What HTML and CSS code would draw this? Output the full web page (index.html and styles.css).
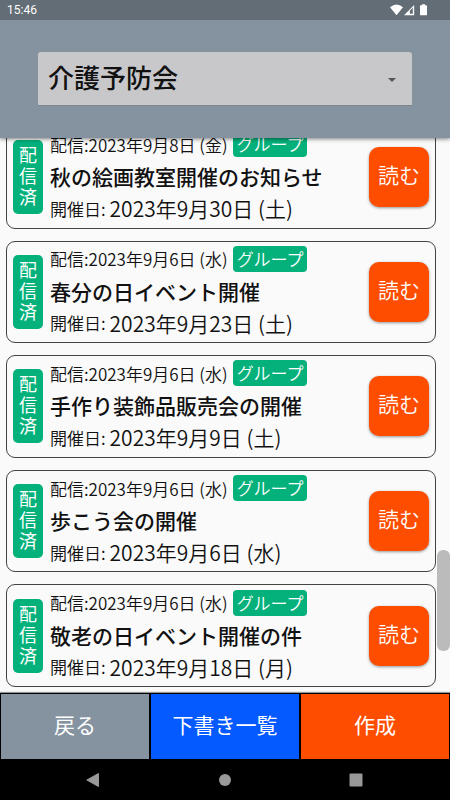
FILE: index.html
```html
<!DOCTYPE html>
<html lang="ja">
<head>
<meta charset="utf-8">
<meta name="viewport" content="width=device-width, initial-scale=1">
<title>介護予防会</title>
<link rel="stylesheet" href="styles.css">
</head>
<body>
<div class="screen">
  <div class="status">
    <span class="clock">15:46</span>
    <svg class="status-icons" width="40" height="12" viewBox="0 0 40 12" aria-hidden="true">
      <path d="M0 3.200Q6.500-2 13 3.200L6.500 11.200Z" fill="#fff"/>
      <path d="M14 11.200L24.200 1V11.200Z" fill="#fff"/>
      <path d="M19.800 9.800V6.700L22.800 3.700V9.800Z" fill="#636d76"/>
      <path d="M32 .3h3v1h1.200q.8 0 .8.8v8.300q0 .9-.8.9h-5.400q-.8 0-.8-.9V2.100q0-.8.8-.8H32Z" fill="#fff"/>
    </svg>
  </div>
  <header class="header">
    <div class="picker">
      <select class="picker-select" aria-label="グループ選択"><option>介護予防会</option></select>
      <svg class="picker-arrow" width="8" height="4" viewBox="0 0 8 4" aria-hidden="true"><path d="M0 0h8L4 4Z" fill="#555558"/></svg>
    </div>
  </header>
  <main class="content">
    <div class="list">
      <article class="card">
        <div class="sent">配信済</div>
        <div class="info">
          <div class="row">配信:2023年9月8日 (金)<span class="tag">グループ</span></div>
          <h2 class="title">秋の絵画教室開催のお知らせ</h2>
          <div class="row">開催日:<span class="date">2023年9月30日 (土)</span></div>
        </div>
        <button class="read" type="button">読む</button>
      </article>
      <article class="card">
        <div class="sent">配信済</div>
        <div class="info">
          <div class="row">配信:2023年9月6日 (水)<span class="tag">グループ</span></div>
          <h2 class="title">春分の日イベント開催</h2>
          <div class="row">開催日:<span class="date">2023年9月23日 (土)</span></div>
        </div>
        <button class="read" type="button">読む</button>
      </article>
      <article class="card">
        <div class="sent">配信済</div>
        <div class="info">
          <div class="row">配信:2023年9月6日 (水)<span class="tag">グループ</span></div>
          <h2 class="title">手作り装飾品販売会の開催</h2>
          <div class="row">開催日:<span class="date">2023年9月9日 (土)</span></div>
        </div>
        <button class="read" type="button">読む</button>
      </article>
      <article class="card">
        <div class="sent">配信済</div>
        <div class="info">
          <div class="row">配信:2023年9月6日 (水)<span class="tag">グループ</span></div>
          <h2 class="title">歩こう会の開催</h2>
          <div class="row">開催日:<span class="date">2023年9月6日 (水)</span></div>
        </div>
        <button class="read" type="button">読む</button>
      </article>
      <article class="card">
        <div class="sent">配信済</div>
        <div class="info">
          <div class="row">配信:2023年9月6日 (水)<span class="tag">グループ</span></div>
          <h2 class="title">敬老の日イベント開催の件</h2>
          <div class="row">開催日:<span class="date">2023年9月18日 (月)</span></div>
        </div>
        <button class="read" type="button">読む</button>
      </article>
    </div>
    <div class="thumb"></div>
  </main>
  <footer class="actions">
    <button class="action back" type="button">戻る</button>
    <button class="action drafts" type="button">下書き一覧</button>
    <button class="action create" type="button">作成</button>
  </footer>
  <nav class="system">
    <svg width="14" height="14" viewBox="0 0 14 14" aria-hidden="true"><path d="M12.500.5v13L.8 7Z" fill="#999" stroke="#999" stroke-linejoin="round"/></svg>
    <svg width="14" height="14" viewBox="0 0 14 14" aria-hidden="true"><circle cx="7" cy="7" r="6" fill="#999"/></svg>
    <svg width="14" height="14" viewBox="0 0 14 14" aria-hidden="true"><rect x=".5" y=".5" width="13" height="13" rx="1" fill="#999"/></svg>
  </nav>
</div>
</body>
</html>
```
FILE: styles.css
```css
* { box-sizing: border-box; }

body {
  margin: 0;
  background: #fafafa;
  color: #111;
  font-family: "Noto Sans CJK JP", sans-serif;
}

button, select { font: inherit; border: 0; margin: 0; }

.screen {
  display: flex;
  flex-direction: column;
  height: 100vh;
}

.status {
  display: flex;
  align-items: center;
  justify-content: space-between;
  height: 20px;
  padding: 0 20px 0 7px;
  background: #636d76;
  color: #fff;
  position: relative;
  z-index: 3;
}

.clock { font: 12px/20px Roboto, sans-serif; }

.header {
  position: relative;
  z-index: 2;
  padding: 32px 38px;
  background: #8593a0;
  box-shadow: 0 1px 4px rgba(0, 0, 0, .5);
}

.picker {
  display: flex;
  position: relative;
}

.picker-select {
  flex: 1;
  appearance: none;
  height: 54px;
  padding: 0 40px 4px 10px;
  border-bottom: 1px solid #7c868f;
  border-radius: 3px 3px 0 0;
  background: #c8c8cb;
  color: #111;
  font-size: 26px;
  font-weight: 500;
}

.picker-arrow {
  position: absolute;
  right: 16px;
  top: 26px;
}

.content {
  position: relative;
  flex: 1;
  min-height: 0;
}

.list {
  display: grid;
  grid-template-rows: repeat(5, 1fr);
  gap: 12px;
  height: calc(100% + 12px);
  margin-top: -12px;
  padding: 0 14px 6px 6px;
}

.card {
  display: flex;
  align-items: center;
  padding: 0 6px;
  border: 1px solid #444;
  border-radius: 9px;
}

.sent {
  width: 30px;
  padding: 4px 6px 7px;
  border-radius: 5px;
  background: #04b17b;
  color: #fff;
  font-size: 18px;
  line-height: 21px;
}

.info {
  flex: 1;
  padding: 0 0 2px 7px;
  white-space: nowrap;
}

.row {
  display: flex;
  align-items: center;
  gap: 4px;
  height: 32px;
  font-size: 17px;
  font-weight: 350;
}

.tag {
  margin-left: 1px;
  padding: 0 3px 0 4px;
  border-radius: 4px;
  background: #04b17b;
  color: #fff;
  font-size: 17px;
  line-height: 26px;
}

.title {
  margin: 0;
  font-size: 21px;
  font-weight: 500;
  line-height: 32px;
}

.date { font-size: 21px; }

.read {
  width: 60px;
  height: 60px;
  padding: 0 0 6px;
  border-radius: 10px;
  background: #ff4d00;
  box-shadow: 0 1px 3px rgba(0, 0, 0, .4);
  color: #fff;
  font-size: 21px;
  font-weight: 350;
}

.thumb {
  position: absolute;
  right: 0;
  bottom: 42px;
  width: 13px;
  height: 101px;
  border-radius: 6px;
  background: #bbb;
}

.actions {
  position: relative;
  display: grid;
  grid-template-columns: repeat(3, 1fr);
  gap: 2px;
  padding: 1px;
  background: #000;
  box-shadow: 0 -1px 1px rgba(0, 0, 0, .4);
}

.action {
  height: 65px;
  padding: 0 0 5px;
  color: #fff;
  font-size: 21px;
}

.back { background: #8593a0; }
.drafts { background: #0459ff; }
.create { background: #ff4d00; }

.system {
  position: relative;
  display: flex;
  justify-content: space-between;
  align-items: center;
  height: 40px;
  padding: 0 87px 0 86px;
  background: #000;
}
```
